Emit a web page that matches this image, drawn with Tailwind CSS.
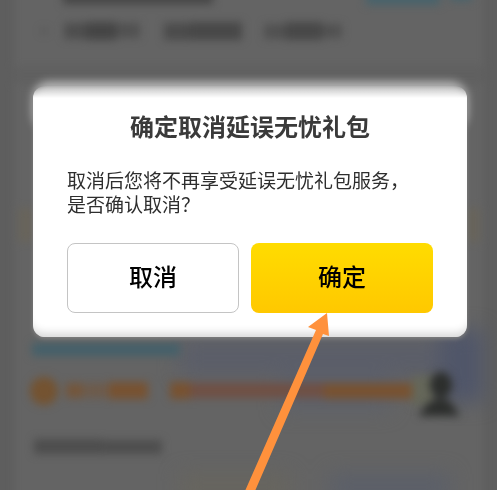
<!DOCTYPE html>
<html lang="zh-CN">

<head>
    <meta charset="UTF-8">
    <meta name="viewport" content="width=device-width, initial-scale=1.0">
    <title>确定取消延误无忧礼包</title>
    <script src="https://cdn.jsdelivr.net/npm/@tailwindcss/browser@4"></script>
</head>

<body class="relative min-h-screen overflow-hidden bg-[#646464] font-['Liberation_Sans','Noto_Sans_CJK_SC',sans-serif]">
<!-- dimmed page behind the dialog -->
<svg class="absolute inset-0 h-full w-full" viewBox="0 0 497 490" preserveAspectRatio="xMidYMin slice" aria-hidden="true">
    <defs>
        <filter id="soft" x="-20%" y="-50%" width="140%" height="200%" color-interpolation-filters="sRGB"><feGaussianBlur stdDeviation="4"/></filter>
        <filter id="wide" x="-30%" y="-60%" width="160%" height="220%" color-interpolation-filters="sRGB"><feGaussianBlur stdDeviation="10"/></filter>
    </defs>
    <rect width="497" height="490" fill="#646464"/>
    <g filter="url(#soft)">
        <rect x="-10" y="-10" width="24" height="520" fill="#5e5e5e"/>
        <rect x="484" y="-10" width="24" height="520" fill="#5e5e5e"/>
        <rect x="14" y="66" width="470" height="18" fill="#606060"/>
        <rect x="18" y="208" width="16" height="34" fill="#68645b"/>
        <rect x="466" y="208" width="14" height="34" fill="#68645b"/>
    </g>
    <g filter="url(#wide)">
        <rect x="180" y="340" width="300" height="36" fill="#5b5e69"/>
        <rect x="440" y="330" width="44" height="72" fill="#505669"/>
        <rect x="280" y="376" width="110" height="34" fill="#5e616a"/>
        <rect x="330" y="474" width="120" height="26" fill="#5b5f69"/>
        <rect x="180" y="474" width="110" height="26" fill="#67655e"/>
    </g>
    <g filter="url(#soft)">
        <g fill="#454545">
            <rect x="63" y="-8" width="150" height="12"/>
            <rect x="64" y="23" width="22" height="16" opacity=".7"/>
            <rect x="86" y="22" width="30" height="18"/>
            <rect x="116" y="23" width="24" height="15" opacity=".6"/>
            <rect x="164" y="23" width="26" height="17" opacity=".8"/>
            <rect x="190" y="22" width="52" height="18" opacity=".9"/>
            <rect x="264" y="24" width="24" height="15" opacity=".6"/>
            <rect x="286" y="22" width="36" height="18" opacity=".9"/>
            <rect x="322" y="24" width="20" height="14" opacity=".6"/>
            <rect x="34" y="439" width="68" height="15" opacity=".75"/>
            <rect x="102" y="440" width="60" height="14" opacity=".7"/>
            <circle cx="44" cy="31" r="3" opacity=".5"/>
        </g>
        <rect x="366" y="-8" width="74" height="13" fill="#48636c"/>
        <rect x="450" y="-8" width="22" height="9" fill="#48636c"/>
        <rect x="32" y="343" width="148" height="13" fill="#44606a"/>
        <circle cx="44" cy="391" r="14" fill="#745331"/>
        <g fill="#785231">
            <rect x="66" y="383" width="18" height="15" opacity=".8"/>
            <rect x="86" y="383" width="20" height="15" opacity=".5"/>
            <rect x="108" y="382" width="40" height="17"/>
            <rect x="170" y="382" width="20" height="17"/>
            <rect x="190" y="383" width="134" height="15" fill="#705044"/>
            <rect x="324" y="383" width="88" height="16"/>
        </g>
        <rect x="412" y="376" width="24" height="30" fill="#65675a"/>
    </g>
    <g filter="url(#soft)" fill="#2c2e2c">
        <ellipse cx="441" cy="385" rx="11" ry="13"/>
        <path d="M418 416l11-14 10-4 11 3 10 15z"/>
    </g>
</svg>

<main class="relative pt-[86px] pr-[30px] pl-[33px]">
    <section role="dialog" aria-modal="true" aria-labelledby="dialog-title" class="relative px-[34px] pt-6 pb-6">
        <div class="absolute inset-x-0 -top-1 h-12 rounded-2xl bg-white/60 blur-[5px]"></div>
        <div class="absolute inset-0 rounded-xl bg-linear-to-b from-white/0 from-0% via-white via-[12px] to-white shadow-[inset_0_-10px_8px_-6px_#d8d8d8,0_2px_4px_#808080]"></div>
        <div class="relative">
            <h1 id="dialog-title" class="text-center text-[24px] leading-9 font-bold text-[#3a3a3a]">确定取消延误无忧礼包</h1>
            <p class="mt-6 text-[19px] leading-6 text-[#2e2e2e]">取消后您将不再享受延误无忧礼包服务，<br>是否确认取消？</p>
            <div class="mt-[25px] flex gap-3">
                <button type="button" class="h-[70px] flex-[171] rounded-lg border border-[#c4c4c4] bg-white text-[24px] font-medium text-black">取消</button>
                <button type="button" class="h-[70px] flex-[183] rounded-lg bg-linear-to-b from-[#ffdc00] to-[#ffc800] text-[24px] font-medium text-black">确定</button>
            </div>
        </div>
    </section>
</main>

<!-- pointer to the confirm button -->
<svg class="pointer-events-none absolute inset-0 h-full w-full" viewBox="0 0 497 490" preserveAspectRatio="xMidYMin slice" aria-hidden="true">
    <path d="M327 313L308 327L316 330L245 491H255L323 334L329 336Z" fill="#ff913c"/>
</svg>
</body>

</html>
